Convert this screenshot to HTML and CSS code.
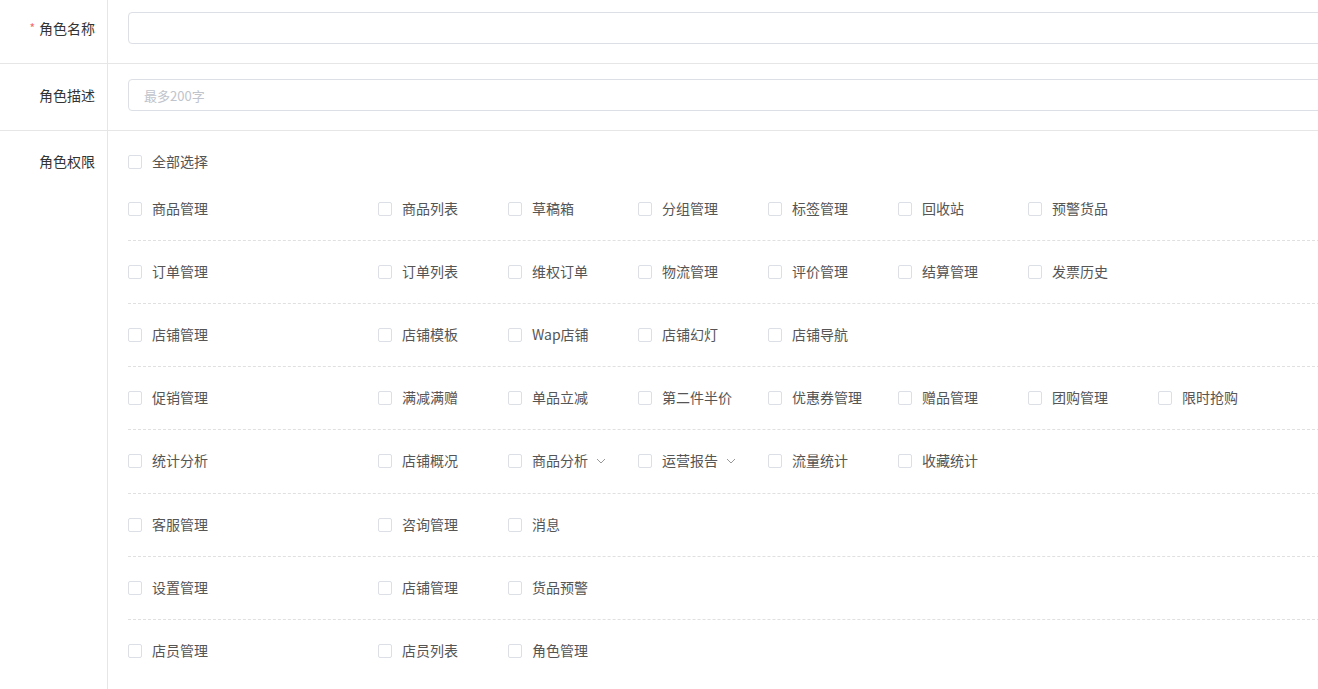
FILE: index.html
```html
<!DOCTYPE html>
<html lang="zh-CN">
<head>
    <meta charset="UTF-8">
    <meta name="viewport" content="width=device-width, initial-scale=1.0">
    <title>角色编辑</title>
    <link rel="stylesheet" href="styles.css">
</head>
<body>

    <div class="role-form">
        <!-- 角色名称 -->
        <div class="form-row row-name">
            <div class="form-label"><span class="required">*</span>角色名称</div>
            <div class="form-body">
                <input type="text" class="text-input">
            </div>
        </div>

        <!-- 角色描述 -->
        <div class="form-row row-desc">
            <div class="form-label">角色描述</div>
            <div class="form-body">
                <input type="text" class="text-input" placeholder="最多200字">
            </div>
        </div>

        <!-- 角色权限 -->
        <div class="form-row row-perm">
            <div class="form-label">角色权限</div>
            <div class="form-body">
                <div class="check-all">
                    <label class="check"><span class="box"></span>全部选择</label>
                </div>

                <div class="perm-group">
                    <label class="check main"><span class="box"></span>商品管理</label>
                    <label class="check"><span class="box"></span>商品列表</label>
                    <label class="check"><span class="box"></span>草稿箱</label>
                    <label class="check"><span class="box"></span>分组管理</label>
                    <label class="check"><span class="box"></span>标签管理</label>
                    <label class="check"><span class="box"></span>回收站</label>
                    <label class="check"><span class="box"></span>预警货品</label>
                </div>

                <div class="perm-group">
                    <label class="check main"><span class="box"></span>订单管理</label>
                    <label class="check"><span class="box"></span>订单列表</label>
                    <label class="check"><span class="box"></span>维权订单</label>
                    <label class="check"><span class="box"></span>物流管理</label>
                    <label class="check"><span class="box"></span>评价管理</label>
                    <label class="check"><span class="box"></span>结算管理</label>
                    <label class="check"><span class="box"></span>发票历史</label>
                </div>

                <div class="perm-group">
                    <label class="check main"><span class="box"></span>店铺管理</label>
                    <label class="check"><span class="box"></span>店铺模板</label>
                    <label class="check"><span class="box"></span>Wap店铺</label>
                    <label class="check"><span class="box"></span>店铺幻灯</label>
                    <label class="check"><span class="box"></span>店铺导航</label>
                </div>

                <div class="perm-group">
                    <label class="check main"><span class="box"></span>促销管理</label>
                    <label class="check"><span class="box"></span>满减满赠</label>
                    <label class="check"><span class="box"></span>单品立减</label>
                    <label class="check"><span class="box"></span>第二件半价</label>
                    <label class="check"><span class="box"></span>优惠券管理</label>
                    <label class="check"><span class="box"></span>赠品管理</label>
                    <label class="check"><span class="box"></span>团购管理</label>
                    <label class="check"><span class="box"></span>限时抢购</label>
                </div>

                <!-- this row has sub-menus, slightly taller -->
                <div class="perm-group has-sub">
                    <label class="check main"><span class="box"></span>统计分析</label>
                    <label class="check"><span class="box"></span>店铺概况</label>
                    <label class="check"><span class="box"></span>商品分析<svg class="arrow" viewBox="0 0 10 6"><path d="M1 1l4 4 4-4"/></svg></label>
                    <label class="check"><span class="box"></span>运营报告<svg class="arrow" viewBox="0 0 10 6"><path d="M1 1l4 4 4-4"/></svg></label>
                    <label class="check"><span class="box"></span>流量统计</label>
                    <label class="check"><span class="box"></span>收藏统计</label>
                </div>

                <div class="perm-group">
                    <label class="check main"><span class="box"></span>客服管理</label>
                    <label class="check"><span class="box"></span>咨询管理</label>
                    <label class="check"><span class="box"></span>消息</label>
                </div>

                <div class="perm-group">
                    <label class="check main"><span class="box"></span>设置管理</label>
                    <label class="check"><span class="box"></span>店铺管理</label>
                    <label class="check"><span class="box"></span>货品预警</label>
                </div>

                <div class="perm-group last">
                    <label class="check main"><span class="box"></span>店员管理</label>
                    <label class="check"><span class="box"></span>店员列表</label>
                    <label class="check"><span class="box"></span>角色管理</label>
                </div>
            </div>
        </div>
    </div>

</body>
</html>
```

FILE: styles.css
```css
/* Page base */
html, body {
    margin: 0;
    padding: 0;
    overflow: hidden;
    background: #fff;
}
body {
    font-family: "Noto Sans CJK SC", "Noto Sans", sans-serif;
    font-size: 14px;
    color: #333;
}

/* Form layout: label column + body */
.role-form {
    width: 1340px;
}
.form-row {
    display: flex;
    box-sizing: border-box;
    border-bottom: 1px solid #e6e6e6;
}
.form-label {
    width: 95px;
    flex: none;
    padding-right: 12px;
    border-right: 1px solid #e6e6e6;
    text-align: right;
    color: #333;
    line-height: 32px;
}
.form-label .required {
    color: #f56c6c;
    margin-right: 4px;
    font-size: 12px;
    line-height: 1;
    vertical-align: top;
    position: relative;
    top: 10px;
}
.form-body {
    flex: 1;
    padding-left: 20px;
}

/* Text rows */
.row-name {
    height: 64px;
}
.row-name .form-label,
.row-name .form-body {
    padding-top: 12px;
}
.row-desc {
    height: 67px;
}
.row-desc .form-label,
.row-desc .form-body {
    padding-top: 15px;
}
.text-input {
    display: block;
    box-sizing: border-box;
    width: 100%;
    height: 32px;
    padding: 0 15px;
    border: 1px solid #dcdfe6;
    border-radius: 4px;
    font-family: inherit;
    font-size: 13px;
    color: #333;
    outline: none;
}
.text-input::placeholder {
    color: #c0c4cc;
}

/* Permission checkboxes */
.row-perm {
    border-bottom: none;
    height: 560px;
}
.row-perm .form-label {
    padding-top: 14px;
}
.row-perm .form-body {
    padding-top: 15px;
}
.check-all {
    height: 32px;
    display: flex;
    align-items: center;
}
.perm-group {
    display: flex;
    align-items: center;
    height: 62px;
    border-bottom: 1px dashed #e0e0e0;
}
.perm-group.has-sub {
    padding-bottom: 1px;
}
.perm-group.last {
    border-bottom: none;
}
.check {
    display: flex;
    align-items: center;
    width: 130px;
    flex: none;
    margin-top: -2px;
    line-height: 20px;
    color: #555;
    cursor: pointer;
    white-space: nowrap;
}
.check.main {
    width: 250px;
}
.check .box {
    box-sizing: border-box;
    width: 14px;
    height: 14px;
    margin-top: 2px;
    margin-right: 10px;
    border: 1px solid #dcdfe6;
    border-radius: 2px;
    background: #fff;
}
.check .arrow {
    width: 10px;
    height: 6px;
    margin-top: 2px;
    margin-left: 8px;
    fill: none;
    stroke: #999;
    stroke-width: 1;
}
```
